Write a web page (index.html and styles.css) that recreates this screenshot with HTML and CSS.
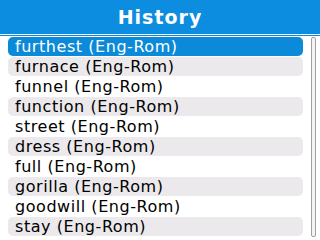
FILE: index.html
```html
<!DOCTYPE html>
<html>
<head>
<meta charset="utf-8">
<link rel="stylesheet" href="styles.css">
</head>
<body>
<div class="screen">
  <header class="title">History</header>
  <div class="rule"></div>
  <div class="content">
    <ul class="list">
      <li class="row selected">furthest (Eng-Rom)</li>
      <li class="row">furnace (Eng-Rom)</li>
      <li class="row">funnel (Eng-Rom)</li>
      <li class="row">function (Eng-Rom)</li>
      <li class="row">street (Eng-Rom)</li>
      <li class="row">dress (Eng-Rom)</li>
      <li class="row">full (Eng-Rom)</li>
      <li class="row">gorilla (Eng-Rom)</li>
      <li class="row">goodwill (Eng-Rom)</li>
      <li class="row">stay (Eng-Rom)</li>
    </ul>
    <div class="scrollbar"><div class="thumb"></div></div>
  </div>
</div>
</body>
</html>
```

FILE: styles.css
```css
html, body {
  margin: 0;
  padding: 0;
  background: #ffffff;
}
.screen {
  width: 320px;
  height: 240px;
  overflow: hidden;
  display: flex;
  flex-direction: column;
  font-family: "DejaVu Sans", sans-serif;
}
.title {
  height: 34px;
  background: #0c8de0;
  color: #ffffff;
  font-weight: bold;
  font-size: 19px;
  letter-spacing: 1px;
  line-height: 34px;
  text-align: center;
}
.rule {
  height: 1px;
  margin-top: 1px;
  background: #0c8de0;
}
.content {
  display: flex;
  padding-top: 1px;
}
.list {
  list-style: none;
  margin: 0 0 0 8px;
  padding: 0;
  width: 295px;
}
.row {
  height: 19px;
  margin-bottom: 1px;
  padding-left: 7px;
  font-size: 16px;
  line-height: 19px;
  letter-spacing: 0.55px;
  color: #000000;
  border-radius: 5px;
  white-space: nowrap;
}
.row:nth-child(even) {
  background: #ebe9eb;
}
.row.selected {
  background: #0a8ad8;
  color: #ffffff;
}
.scrollbar {
  margin-left: 8px;
  width: 3px;
  height: 198px;
  border: 1px solid #a0a0a0;
  border-radius: 2px;
  background: #f4f4f4;
}
.thumb {
  height: 100%;
}
```
